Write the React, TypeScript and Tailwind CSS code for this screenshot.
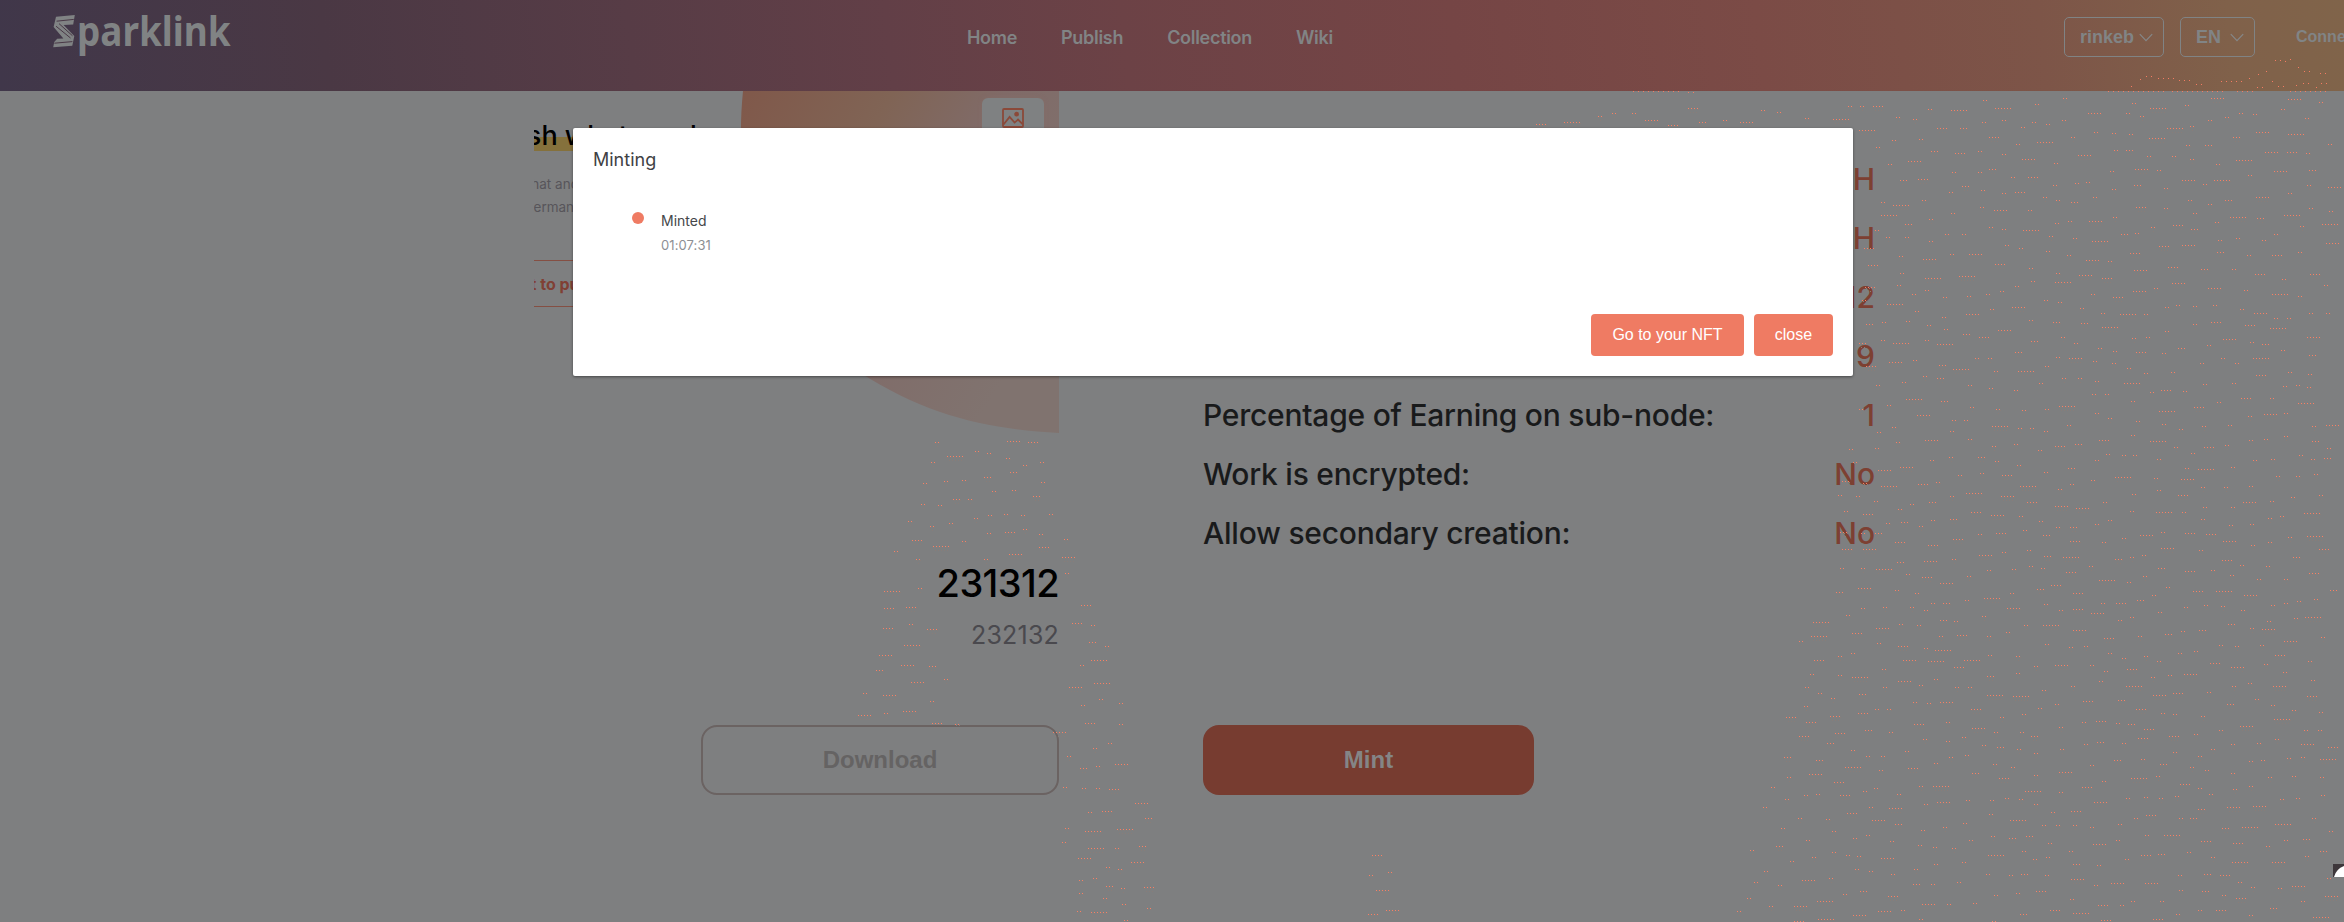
type Pt = [number, number];

const regions: Pt[][] = [
  [[925, 440], [1052, 440], [1100, 600], [1150, 800], [1180, 922], [1062, 922], [1062, 780], [1050, 720], [1075, 640], [1060, 560], [925, 560], [965, 725], [845, 725]],
  [[1385, 805], [1415, 922], [1350, 922]],
  [[1960, 98], [2344, 98], [2344, 922], [1730, 922], [1850, 430], [1872, 120]],
  [[1500, 112], [1960, 100], [1960, 135], [1500, 127]],
];

function inside(x: number, y: number, poly: Pt[]) {
  let hit = false;
  for (let i = 0, j = poly.length - 1; i < poly.length; j = i++) {
    const [xi, yi] = poly[i];
    const [xj, yj] = poly[j];
    if (yi > y !== yj > y && x < ((xj - xi) * (y - yi)) / (yj - yi) + xi) hit = !hit;
  }
  return hit;
}

function buildSpecks() {
  let seed = 7331;
  const rnd = () => {
    seed = (seed * 1103515245 + 12345) % 2147483648;
    return seed / 2147483648;
  };
  let bright = "";
  let faint = "";
  for (let row = 100; row < 940; row += 19) {
    let x = 820 + rnd() * 30;
    while (x < 2330) {
      const n = rnd() < 0.5 ? 2 : 2 + Math.floor(rnd() * 5);
      const w = n * 3;
      const y = row + Math.round(Math.sin(x / 26 + row * 0.31) * 7 + (rnd() - 0.5) * 8);
      if (regions.some((p) => inside(x, y, p) && inside(x + w, y, p))) {
        bright += `M${Math.round(x)} ${y + 0.5}h${w - 2}`;
        faint += `M${Math.round(x) + 1} ${y + 1.5}h${w - 2}M${Math.round(x) + 2} ${y + 4.5}h${w - 3}`;
      }
      x += w + 5 + rnd() * 18;
    }
  }
  return { bright, faint };
}

const specks = buildSpecks();

const headerSpecks =
  "M2131 86.5h2M2140 79.5h1M2146 76.5h8M2158 78.5h16M2179 80.5h13M2196 84.5h8M2221 81.5h22M2249 78.5h1M2258 74.5h1M2266 71.5h1M2275 60.5h8M2285 61.5h1M2290 59.5h1M2298 67.5h1M2304 71.5h8M2320 73.5h8M2257 87.5h8M2272 81.5h1M2278 86.5h8M2296 85.5h1M2303 83.5h8M2316 87.5h1M2321 83.5h10M2108 91.5h60M2172 91.5h54M2237 91.5h20M2290 91.5h40M1633 91.5h46M1688 92.5h6";

const properties: [string, string][] = [
  ["Current price:", "0.1 ETH"],
  ["Profit:", "0 ETH"],
  ["Maximum children:", "12"],
  ["Remaining children:", "9"],
  ["Percentage of Earning on sub-node:", "1"],
  ["Work is encrypted:", "No"],
  ["Allow secondary creation:", "No"],
];

function Chevron() {
  return (
    <svg width="14" height="9" viewBox="0 0 14 9" fill="none" stroke="#858788" strokeWidth="1.2">
      <path d="M.8 1.2 7 7.6l6.2-6.4" />
    </svg>
  );
}

function Picture() {
  return (
    <svg width="22" height="20" viewBox="0 0 22 20" fill="none" stroke="#8b4939" strokeWidth="1.8">
      <rect x="1" y="1" width="20" height="18" rx="1" />
      <path d="M1.5 16.5 7.6 9l5 5.6 3.4-3 4.6 4.6" />
      <circle cx="14.6" cy="6.2" r="1.5" fill="#8b4939" />
    </svg>
  );
}

function Logo() {
  return (
    <div className="flex h-[60px] w-[254px] shrink-0 items-start pl-[53px] pt-[7px] text-[#808384]">
      <svg className="mt-[7px] shrink-0" width="23" height="34" viewBox="0 0 23 34" fill="#808384">
        <path d="M3 2.7 21.8 1l-1.6 9.6-9.6.5L21.3 22l-2 9.8L.2 33.2 1.2 28l3-3.2 6.2-.4L.6 13z" />
        <path d="M3.6 7.2 20.8 5.4M3 12.2 17.5 24M6 9.6l13.5 12.2M1.4 29.2l18-1.6" fill="none" stroke="#493846" strokeWidth="1" />
      </svg>
      <span className="ml-[1px] origin-left scale-x-[0.9] whitespace-nowrap font-['Noto_Sans',sans-serif] text-[41px] font-bold leading-[46px]">
        parklink
      </span>
    </div>
  );
}

function Header() {
  return (
    <header className="flex h-[91px] shrink-0 items-start overflow-hidden bg-linear-[84deg,#40374a_0%,#4a3844_14%,#573c46_27%,#623f47_38%,#6c4246_48%,#754545_62%,#7b4b46_75%,#7d5548_87%,#80614a_95%,#80644a_100%] text-[#818485]">
      <Logo />
      <nav className="ml-[713px] flex w-[1097px] shrink-0 gap-[44px] pt-[25px] font-['Inter',sans-serif] text-[18px] font-semibold leading-[25px] tracking-[-0.3px]">
        <span>Home</span>
        <span>Publish</span>
        <span>Collection</span>
        <span>Wiki</span>
      </nav>
      <div className="flex shrink-0 items-center pt-[17px] font-['Liberation_Sans',sans-serif] font-bold">
        <div className="flex h-10 w-[100px] items-center justify-between rounded-[5px] border border-[#808384] pl-[15px] pr-[10px] text-[18px]">
          rinkeb
          <Chevron />
        </div>
        <div className="ml-4 flex h-10 w-[75px] items-center justify-between rounded-[5px] border border-[#808384] pl-[15px] pr-[10px] text-[18px]">
          EN
          <Chevron />
        </div>
        <span className="ml-[41px] text-[16px]">Connect</span>
      </div>
    </header>
  );
}

function Artwork() {
  return (
    <div className="relative h-[342px] w-[525px] overflow-hidden">
      <svg className="absolute inset-0" width="525" height="342" viewBox="0 0 525 342">
        <defs>
          <linearGradient id="disc" gradientUnits="userSpaceOnUse" x1="205" y1="0" x2="525" y2="200">
            <stop offset="0" stopColor="#80584a" />
            <stop offset="0.35" stopColor="#806455" />
            <stop offset="0.6" stopColor="#806b68" />
            <stop offset="1" stopColor="#80736f" />
          </linearGradient>
        </defs>
        <path d="M209 0C196 130 245 230 325 281 395 326 455 338 525 342V0z" fill="url(#disc)" />
      </svg>
      <div className="relative h-full font-['Inter',sans-serif]">
        <div className="flex h-[60px] items-end">
          <span className="-ml-[71px] whitespace-nowrap bg-linear-[to_bottom,transparent_54%,#85713c_54%] bg-size-[155px_100%] bg-no-repeat text-[27px] font-medium leading-[30px] text-black">
            Publish what you have
          </span>
        </div>
        <div className="ml-[-16px] mt-[22px] whitespace-nowrap text-[13.5px] leading-[23px] text-[#57555a]">
          <div>What and</div>
          <div className="ml-[7px]">Permanent</div>
        </div>
        <div className="mt-[41px] flex h-[47px] w-[180px] items-center border-y border-[#854f43] text-[16px] font-bold text-[#804034]">
          <span className="-ml-[36px] whitespace-nowrap">Start to publish</span>
        </div>
      </div>
      <div className="absolute left-[448px] top-[7px] flex h-[60px] w-[62px] justify-center rounded-md bg-[#7f8182] pt-[10px] shadow-[0_0_4px_#846d68]">
        <Picture />
      </div>
    </div>
  );
}

function Dialog() {
  return (
    <section className="absolute left-[573px] top-[128px] flex h-[248px] w-[1280px] flex-col rounded-[2px] bg-white font-['Inter',sans-serif] shadow-[0_1px_3px_rgba(0,0,0,0.45)]">
      <h2 className="pl-5 pt-[19px] text-[18px] leading-[26px] text-[#3f4144]">Minting</h2>
      <div className="flex pl-[59px] pt-[39px]">
        <span className="h-3 w-3 rounded-full bg-[#ef7b63]" />
        <div className="-mt-[2px] ml-[17px]">
          <div className="text-[14px] leading-[22px] text-[#45474a]">Minted</div>
          <div className="mt-[3px] text-[13px] leading-[20px] tracking-[0.1px] text-[#8d8f94]">01:07:31</div>
        </div>
      </div>
      <div className="mb-5 mr-5 mt-auto flex justify-end gap-[10px] font-['Liberation_Sans',sans-serif] text-[16px] text-white">
        <button className="h-[42px] w-[153px] rounded-[4px] bg-[#ef7b63]">Go to your NFT</button>
        <button className="h-[42px] w-[79px] rounded-[4px] bg-[#ef7b63]">close</button>
      </div>
    </section>
  );
}

export default function App() {
  return (
    <div className="relative flex h-[922px] w-full flex-col overflow-hidden bg-[#7e7f80]">
      <Header />
      <main className="flex flex-1 font-['Inter',sans-serif]">
        <section className="ml-[534px] flex w-[525px] shrink-0 flex-col items-end">
          <Artwork />
          <div className="mt-[127px] text-[38px] font-medium leading-[46px] tracking-[-0.6px] text-black">231312</div>
          <div className="mt-[13px] text-[25px] leading-[32px] tracking-[0.2px] text-[#4a494e]">232132</div>
          <button className="mt-[74px] h-[70px] w-[358px] rounded-[16px] border-2 border-[#6b6362] font-['Liberation_Sans',sans-serif] text-[24px] font-bold text-[#656363]">
            Download
          </button>
        </section>
        <section className="ml-[144px] flex w-[672px] shrink-0 flex-col pt-[59px]">
          {properties.map(([label, value]) => (
            <div key={label} className="flex h-[59px] items-center justify-between text-[30px] font-medium">
              <span className="tracking-[-0.24px] text-[#191a1b]">{label}</span>
              <span className="text-[#7d4032]">{value}</span>
            </div>
          ))}
          <button className="mt-[162px] h-[70px] w-[331px] rounded-[16px] bg-[#773c30] font-['Liberation_Sans',sans-serif] text-[24px] font-bold text-[#848586]">
            Mint
          </button>
        </section>
      </main>
      <svg className="absolute inset-0" width="2344" height="922" viewBox="0 0 2344 922" fill="none">
        <path d={specks.faint} stroke="#887d79" strokeDasharray="1 2" />
        <path d={specks.bright} stroke="#f98063" strokeDasharray="1 2" />
        <path d={headerSpecks} stroke="#f47c62" strokeDasharray="1 4" />
        <path d="M2333 864h11v13h-11z" fill="#3e373b" />
        <path d="M2344 866q-8 3-10 11h10z" fill="#fff" />
      </svg>
      <Dialog />
    </div>
  );
}
